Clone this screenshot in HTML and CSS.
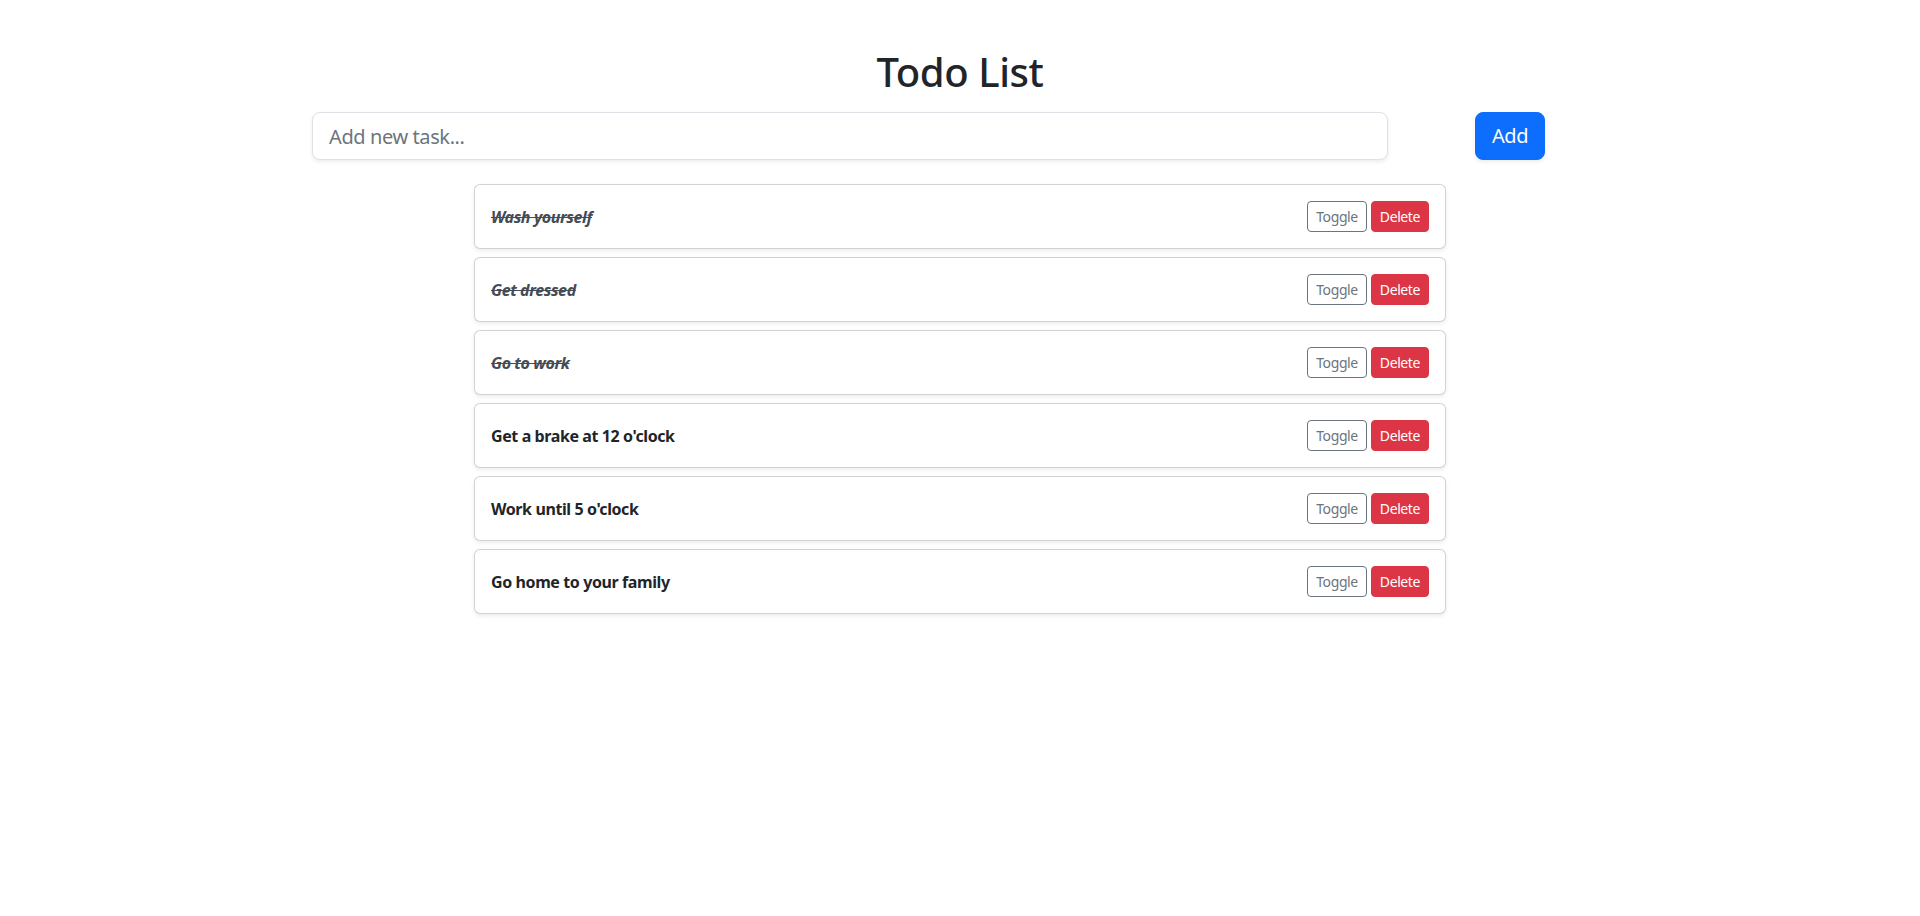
FILE: index.html
```html
<!DOCTYPE html>
<html lang="en">
<head>
<meta charset="utf-8">
<title>Todo List</title>
<link rel="stylesheet" href="styles.css">
</head>
<body>
<div class="container">
  <h1 class="title">Todo List</h1>
  <form class="add-row">
    <div class="col-input">
      <input class="task-input" type="text" placeholder="Add new task...">
    </div>
    <div class="col-btn">
      <button type="button" class="btn-add">Add</button>
    </div>
  </form>
  <ul class="todo-list">
    <li class="todo-card"><span class="todo-text done">Wash yourself</span><span class="actions"><button class="btn-toggle">Toggle</button><button class="btn-delete">Delete</button></span></li>
    <li class="todo-card"><span class="todo-text done">Get dressed</span><span class="actions"><button class="btn-toggle">Toggle</button><button class="btn-delete">Delete</button></span></li>
    <li class="todo-card"><span class="todo-text done">Go to work</span><span class="actions"><button class="btn-toggle">Toggle</button><button class="btn-delete">Delete</button></span></li>
    <li class="todo-card"><span class="todo-text">Get a brake at 12 o'clock</span><span class="actions"><button class="btn-toggle">Toggle</button><button class="btn-delete">Delete</button></span></li>
    <li class="todo-card"><span class="todo-text">Work until 5 o'clock</span><span class="actions"><button class="btn-toggle">Toggle</button><button class="btn-delete">Delete</button></span></li>
    <li class="todo-card"><span class="todo-text">Go home to your family</span><span class="actions"><button class="btn-toggle">Toggle</button><button class="btn-delete">Delete</button></span></li>
  </ul>
</div>
</body>
</html>
```
FILE: styles.css
```css
* { box-sizing: border-box; }
html, body { margin: 0; padding: 0; background: #fff; }
body {
  font-family: "Noto Sans", "Open Sans", "Liberation Sans", sans-serif;
  color: #212529;
  font-size: 16px;
  line-height: 1.5;
  letter-spacing: -0.025em;
}
.container {
  max-width: 1320px;
  margin: 0 auto;
  padding: 48px 12px 0;
}
.title {
  margin: 0 0 16px;
  text-align: center;
  font-size: 40px;
  font-weight: 500;
  line-height: 48px;
  color: #212529;
}
.add-row {
  display: flex;
  margin: 0 -12px;
}
.col-input { flex: 0 0 83.3333%; padding: 0 12px; }
.col-btn { flex: 0 0 16.6667%; padding: 0 12px; text-align: center; }
.task-input {
  display: block;
  width: 100%;
  height: 48px;
  padding: 8px 16px;
  font-family: inherit;
  letter-spacing: inherit;
  font-size: 20px;
  line-height: 30px;
  color: #212529;
  border: 1px solid #dee2e6;
  border-radius: 8px;
  box-shadow: 0 2px 4px rgba(0,0,0,.075);
  outline: none;
}
.task-input::placeholder { color: #6c757d; }
.btn-add {
  height: 48px;
  padding: 8px 16px;
  font-family: inherit;
  letter-spacing: inherit;
  font-size: 20px;
  line-height: 30px;
  color: #fff;
  background: #0d6efd;
  border: 1px solid #0d6efd;
  border-radius: 8px;
  box-shadow: 0 2px 4px rgba(0,0,0,.075);
}
.todo-list {
  list-style: none;
  margin: 24px auto 0;
  padding: 0;
  width: 75%;
}
.todo-card {
  display: flex;
  justify-content: space-between;
  align-items: center;
  padding: 16px;
  margin-bottom: 8px;
  border: 1px solid rgba(0,0,0,.175);
  border-radius: 6px;
  box-shadow: 0 2px 4px rgba(0,0,0,.075);
  background: #fff;
}
.todo-text { font-weight: 700; font-size: 16px; color: #212529; }
.todo-text.done { font-style: italic; text-decoration: line-through; color: #454c55; }
.actions { display: flex; gap: 4px; }
.actions button {
  height: 31px;
  padding: 4px 8px;
  font-family: inherit;
  letter-spacing: inherit;
  font-size: 14px;
  line-height: 21px;
  border-radius: 4px;
}
.btn-toggle { color: #6c757d; background: #fff; border: 1px solid #6c757d; }
.btn-delete { color: #fff; background: #dc3545; border: 1px solid #dc3545; }
```
